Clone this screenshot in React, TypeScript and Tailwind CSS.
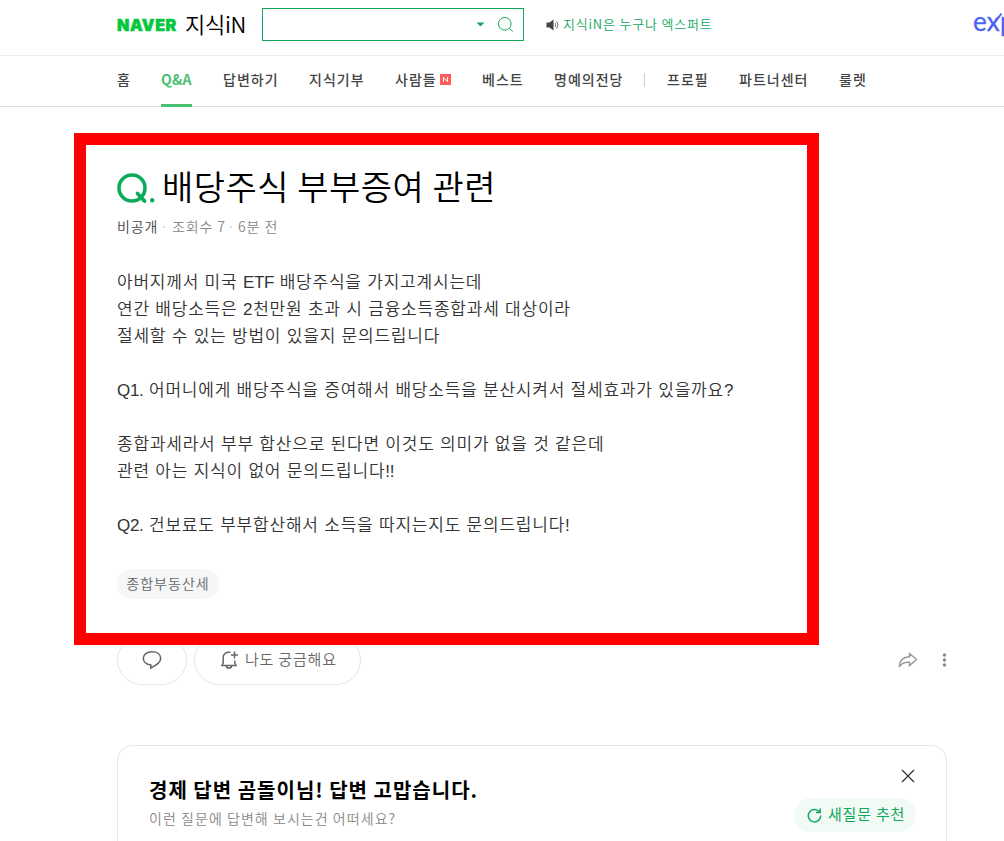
import React from "react";

interface NavItemProps {
  label: string;
  width: string;
  active?: boolean;
  isNew?: boolean;
}

const mainMenu: NavItemProps[] = [
  { label: "홈", width: "w-[44px]" },
  { label: "Q&A", width: "w-[62px]", active: true },
  { label: "답변하기", width: "w-[86px]" },
  { label: "지식기부", width: "w-[86px]" },
  { label: "사람들", width: "w-[87px]", isNew: true },
  { label: "베스트", width: "w-[72px]" },
  { label: "명예의전당", width: "w-[90px]" },
];

const subMenu: NavItemProps[] = [
  { label: "프로필", width: "w-[72px]" },
  { label: "파트너센터", width: "w-[100px]" },
  { label: "룰렛", width: "w-[60px]" },
];

const NavItem: React.FC<NavItemProps> = ({ label, width, active, isNew }) => (
  <li className={`${width} flex h-full shrink-0 items-start whitespace-nowrap`}>
    <a
      className={
        active
          ? "flex h-full items-center border-b-3 border-[#4ac170] pt-[2px] pb-[4px] font-bold tracking-[0.2px] text-[#4ac170]"
          : "flex h-full items-center pb-[5px] tracking-[1px]"
      }
    >
      {label}
    </a>
    {isNew && (
      <svg className="mt-[18px] ml-[3px]" width="11" height="11" viewBox="0 0 11 11">
        <rect width="11" height="11" fill="#ff5c5c" />
        <path d="M3.5 8V3.5L7.5 7.5V3" stroke="#fff" fill="none" />
      </svg>
    )}
  </li>
);

const Header = () => (
  <header className="flex h-14 items-start border-b border-[#eee] pl-[117px]">
    <span className="mt-[14px] w-[68px] shrink-0 font-[Inter,sans-serif] text-[16px] leading-[22px] font-black tracking-[0.6px] text-[#03c73c] [-webkit-text-stroke:0.5px_#03c73c]">
      NAVER
    </span>
    <span className="mt-[7px] w-[77px] shrink-0 text-[22px] leading-[32px] font-[350] tracking-[-0.3px] whitespace-nowrap text-black">
      지식iN
    </span>
    <div className="mt-2 flex h-[33px] w-[262px] shrink-0 items-center justify-end border border-[#13a75c] pr-[9px]">
      <svg width="9" height="5" viewBox="0 0 9 5">
        <path d="M0.5 0.5h8L4.5 4.5z" fill="#13a75c" />
      </svg>
      <svg className="ml-[12px]" width="17" height="17" viewBox="0 0 17 17" fill="none" stroke="#13a75c">
        <circle cx="7.8" cy="7.8" r="6.3" />
        <path d="M12.3 12.3l3.4 3.2" />
      </svg>
    </div>
    <div className="mt-[14px] ml-[22px] flex items-center text-[13px] leading-[20px] font-[350] tracking-[0.8px] whitespace-nowrap text-[#13a75c]">
      <svg className="mt-[2px] mr-[4px]" width="13" height="12" viewBox="0 0 13 12">
        <path d="M0.5 3.5h3L7.5 0.5v11L3.5 8.5h-3z" fill="#444" />
        <path d="M9 4q1.6 2 0 4M10.6 2.2q2.8 3.8 0 7.6" fill="none" stroke="#777" />
      </svg>
      지식iN은 누구나 엑스퍼트
    </div>
    <div className="relative ml-auto h-[40px] w-[31px] shrink-0 overflow-hidden font-[Lato,sans-serif] text-[26px] leading-[43px] tracking-[0.3px] text-[#4a63f5] [-webkit-text-stroke:0.3px_#4a63f5]">
      exp
      <svg className="absolute top-[12px] left-[14px]" width="17" height="20" viewBox="0 0 17 20">
        <path d="M2 18L14.5 1.5" stroke="#4a63f5" strokeWidth="2" />
      </svg>
    </div>
  </header>
);

const Latin: React.FC<{ children: React.ReactNode }> = ({ children }) => (
  <span className="tracking-[-0.3px]">{children}</span>
);

const Question = () => (
  <article className="h-[538px] pt-[60px] pl-[117px] font-[350]">
    <div className="flex h-[40px] items-start">
      <svg className="mt-[6px] shrink-0" width="38" height="32" viewBox="0 0 38 32" fill="none" stroke="#0cab58">
        <circle cx="15" cy="15" r="13" strokeWidth="3.6" />
        <path d="M20.5 20.5l7 7.5" strokeWidth="3.8" strokeLinecap="round" />
        <circle cx="35.2" cy="27.3" r="2.2" fill="#0cab58" stroke="none" />
      </svg>
      <h1 className="-mt-px ml-[7px] text-[34px] leading-[40px] font-[350] tracking-[0.5px] whitespace-nowrap text-black">
        배당주식 부부증여 관련
      </h1>
    </div>
    <p className="mt-[9px] flex h-[20px] items-center text-[14px] leading-[20px] tracking-[0.9px] whitespace-nowrap text-[#888]">
      <span className="w-[55px] text-[#444]">
        비공개<span className="ml-[2px] text-[#ccc]">·</span>
      </span>
      <span className="w-[66px]">
        조회수 7<span className="ml-px text-[#ccc]">·</span>
      </span>
      <span>6분 전</span>
    </p>
    <div className="mt-[33px] font-['Liberation_Sans','Noto_Sans_CJK_KR',sans-serif] text-[17px] leading-[27px] tracking-[0.78px] whitespace-nowrap text-[#333]">
      <p>
        아버지께서 미국 <Latin>ETF</Latin> 배당주식을 가지고계시는데
      </p>
      <p>연간 배당소득은 2천만원 초과 시 금융소득종합과세 대상이라</p>
      <p>절세할 수 있는 방법이 있을지 문의드립니다</p>
      <br />
      <p>
        <Latin>Q1.</Latin> 어머니에게 배당주식을 증여해서 배당소득을 분산시켜서 절세효과가 있을까요?
      </p>
      <br />
      <p>종합과세라서 부부 합산으로 된다면 이것도 의미가 없을 것 같은데</p>
      <p>
        관련 아는 지식이 없어 문의드립니다<Latin>!!</Latin>
      </p>
      <br />
      <p>
        <Latin>Q2.</Latin> 건보료도 부부합산해서 소득을 따지는지도 문의드립니다!
      </p>
    </div>
    <span className="mt-[30px] inline-flex h-[30px] w-[102px] items-center justify-center rounded-full bg-[#f4f6f8] pb-[2px] text-[14px] tracking-[1px] text-[#666]">
      종합부동산세
    </span>
  </article>
);

const Actions = () => (
  <div className="flex h-[50px] items-center pr-[57px] pl-[117px] text-[#666]">
    <button className="flex h-[50px] w-[70px] items-center justify-center rounded-full border border-[#e5e5e5]">
      <svg width="20" height="20" viewBox="0 0 20 20" fill="none" stroke="#666" strokeWidth="1.6">
        <path d="M10 1.8C5 1.8 1.3 4.300 1.300 8.300c0 3.400 3 6.200 7.500 6.700v2.900c3.500-1.600 9.900-4.900 9.900-9.600 0-4-3.700-6.500-8.700-6.500z" />
      </svg>
    </button>
    <button className="ml-[7px] flex h-[50px] w-[167px] items-center rounded-full border border-[#e5e5e5] pb-[2px] pl-[25px] text-[15px] font-[350] tracking-[0.8px] whitespace-nowrap">
      <svg className="mt-[2px] mr-[6px]" width="19" height="20" viewBox="0 0 19 20" fill="none" stroke="#666" strokeWidth="1.5">
        <path d="M10.5 2.3C6 1.500 3.200 4 3.200 7.500V13L2 15.500h14L14.800 13V10.500" />
        <path d="M6.200 16c.5 2.800 5 2.800 5.500 0M14.500 1.500v7M11 5h7" />
      </svg>
      나도 궁금해요
    </button>
    <svg className="ml-auto" width="20" height="17" viewBox="0 0 20 17" fill="none" stroke="#999" strokeWidth="1.5">
      <path d="M11.5 1.5L18.5 7.5L11.5 13.5V10.3C6.5 9.9 3.3 11.3 1.2 15C1.5 9 4.7 5 11.5 4.7z" />
    </svg>
    <svg className="ml-[24px]" width="5" height="16" viewBox="0 0 5 16" fill="#888">
      <circle cx="2.5" cy="3" r="1.7" />
      <circle cx="2.5" cy="8" r="1.7" />
      <circle cx="2.5" cy="13" r="1.7" />
    </svg>
  </div>
);

const RecommendCard = () => (
  <section className="mt-[60px] ml-[117px] flex h-[110px] w-[830px] items-start justify-between rounded-t-[16px] border border-b-0 border-[#e5e5e5] pt-[20px] pr-[30px] pl-[31px]">
    <div className="whitespace-nowrap">
      <h2 className="mt-[9px] text-[20px] leading-[30px] font-bold tracking-[1px] text-black">
        경제 답변 곰돌이님! 답변 고맙습니다.
      </h2>
      <p className="mt-[3px] text-[14px] leading-[20px] font-[350] tracking-[1.05px] text-[#888]">
        이런 질문에 답변해 보시는건 어떠세요?
      </p>
    </div>
    <div className="flex flex-col items-end">
      <svg className="mt-[3px] mr-px" width="14" height="14" viewBox="0 0 14 14" stroke="#333" strokeWidth="1.2">
        <path d="M1 1l12 12M13 1L1 13" />
      </svg>
      <button className="mt-[15px] flex h-[34px] w-[122px] items-center rounded-full bg-[#f2faf6] pb-[2px] pl-[13px] text-[15px] tracking-[0.8px] whitespace-nowrap text-[#13a75c]">
        <svg className="mt-[2px] mr-[6px]" width="15" height="15" viewBox="0 0 15 15" fill="none" stroke="#13a75c" strokeWidth="1.5">
          <path d="M12.5 4A6.2 6.2 0 1 0 13.7 7.5M13.2 0.5V4.5H9" />
        </svg>
        새질문 추천
      </button>
    </div>
  </section>
);

export default function App() {
  return (
    <div className="relative h-[841px] w-[1004px] overflow-hidden bg-white font-['Noto_Sans_CJK_KR',sans-serif]">
      <Header />
      <nav className="h-[51px] border-b border-[#ddd]">
        <ul className="flex h-[51px] pl-[117px] text-[14px] font-medium text-[#444]">
          {mainMenu.map((item) => (
            <NavItem key={item.label} {...item} />
          ))}
          <li className="mt-[17px] mr-[22px] h-[14px] w-px bg-[#ccc]" />
          {subMenu.map((item) => (
            <NavItem key={item.label} {...item} />
          ))}
        </ul>
      </nav>
      <Question />
      <div className="-mt-[10px]">
        <Actions />
      </div>
      <RecommendCard />
      <div className="absolute top-[133px] left-[74px] h-[512px] w-[745px] border-[12px] border-[#ff0000]" />
    </div>
  );
}
